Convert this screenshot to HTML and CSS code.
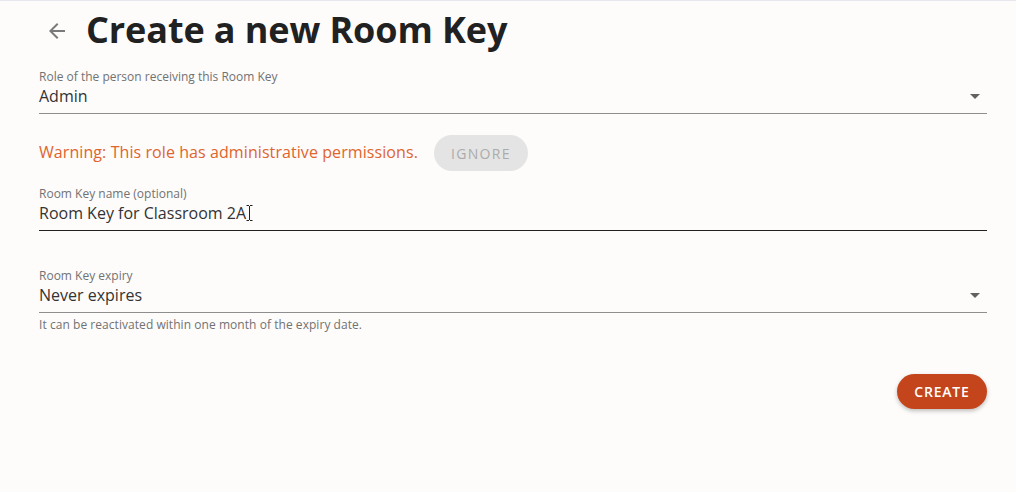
FILE: index.html
```html
<!DOCTYPE html>
<html>
<head>
<meta charset="utf-8">
<link rel="stylesheet" href="styles.css">
</head>
<body>
<div class="topline"></div>
<main class="page">
  <header class="header">
    <button class="back" aria-label="Back">
      <svg width="24" height="24" viewBox="0 0 24 24"><path d="M20 11H7.83l5.59-5.59L12 4l-8 8 8 8 1.41-1.41L7.83 13H20v-2z" fill="#7a7a7a"/></svg>
    </button>
    <h1 class="title">Create a new Room Key</h1>
  </header>

  <div class="field field-role">
    <div class="label">Role of the person receiving this Room Key</div>
    <div class="control">
      <span class="value">Admin</span>
      <span class="caret"></span>
    </div>
  </div>

  <div class="warning-row">
    <span class="warning">Warning: This role has administrative permissions.</span>
    <button class="ignore">IGNORE</button>
  </div>

  <div class="field field-name">
    <div class="label">Room Key name (optional)</div>
    <div class="control focused">
      <span class="value">Room Key for Classroom 2A</span>
      <svg class="ibeam" width="7" height="16" viewBox="0 0 7 16"><path d="M0.5 0.5h2.5M4 0.5h2.5M3.5 1v14M0.5 15.5h2.5M4 15.5h2.5" stroke="#222" stroke-width="1" fill="none"/></svg>
    </div>
  </div>

  <div class="field field-expiry">
    <div class="label">Room Key expiry</div>
    <div class="control">
      <span class="value">Never expires</span>
      <span class="caret"></span>
    </div>
    <div class="hint">It can be reactivated within one month of the expiry date.</div>
  </div>

  <div class="actions">
    <button class="create">CREATE</button>
  </div>
</main>
</body>
</html>
```

FILE: styles.css
```css
* { box-sizing: border-box; }
html, body { margin: 0; padding: 0; }
body {
  background: #fdfcfb;
  font-family: "Open Sans", "Noto Sans", sans-serif;
  color: #212121;
  width: 1016px;
  height: 492px;
  overflow: hidden;
}
.topline { height: 1px; background: #e6e8ee; }
.page {
  padding: 0 29px 0 39px;
  display: flex;
  flex-direction: column;
}
.header {
  display: flex;
  align-items: center;
  height: 61px;
  padding-bottom: 4px;
}
.back {
  border: 0;
  background: none;
  padding: 0;
  margin-left: 6px;
  width: 24px;
  height: 24px;
  display: flex;
  align-items: center;
  justify-content: center;
  margin-top: 2px;
}
.title {
  margin: 0 0 0 17px;
  font-size: 36px;
  font-weight: 700;
  color: #212121;
  line-height: 1;
  letter-spacing: -0.1px;
}
.field { display: flex; flex-direction: column; }
.label {
  font-size: 12px;
  color: #727272;
  line-height: 16px;
}
.control {
  display: flex;
  align-items: flex-start;
  height: 29px;
  border-bottom: 1px solid #8e8e8e;
}
.control.focused { border-bottom-color: #212121; }
.value {
  font-size: 16px;
  color: #333;
  line-height: 22px;
}
.caret {
  margin-left: auto;
  margin-right: 7px;
  margin-top: 9px;
  width: 0;
  height: 0;
  border-left: 5px solid transparent;
  border-right: 5px solid transparent;
  border-top: 5px solid #616161;
}
.field-role { margin-top: 7px; }
.warning-row {
  display: flex;
  align-items: center;
  margin-top: 21px;
  height: 36px;
}
.warning {
  color: #e0642d;
  font-size: 16px;
  letter-spacing: 0.08px;
  margin-top: -3px;
}
.ignore {
  margin-left: 16px;
  height: 36px;
  flex: 0 0 94px;
  border: 0;
  border-radius: 18px;
  background: #e4e4e4;
  color: #ababab;
  font-family: "Open Sans", "Noto Sans", sans-serif;
  font-size: 14px;
  letter-spacing: 1.3px;
  padding: 0;
}
.field-name { margin-top: 15px; }
.ibeam {
  margin-left: 0;
  margin-top: 3px;
}
.field-expiry { margin-top: 37px; }
.hint {
  font-size: 12px;
  color: #727272;
  margin-top: 4px;
  line-height: 16px;
  letter-spacing: 0.05px;
}
.actions {
  display: flex;
  justify-content: flex-end;
  margin-top: 41px;
}
.create {
  height: 35px;
  width: 90px;
  border: 0;
  border-radius: 18px;
  background: #c4441b;
  color: #fff;
  font-family: "Open Sans", "Noto Sans", sans-serif;
  font-size: 14px;
  font-weight: 600;
  letter-spacing: 0.8px;
  box-shadow: 0 2px 4px rgba(0,0,0,0.25);
  padding: 0;
}
```
